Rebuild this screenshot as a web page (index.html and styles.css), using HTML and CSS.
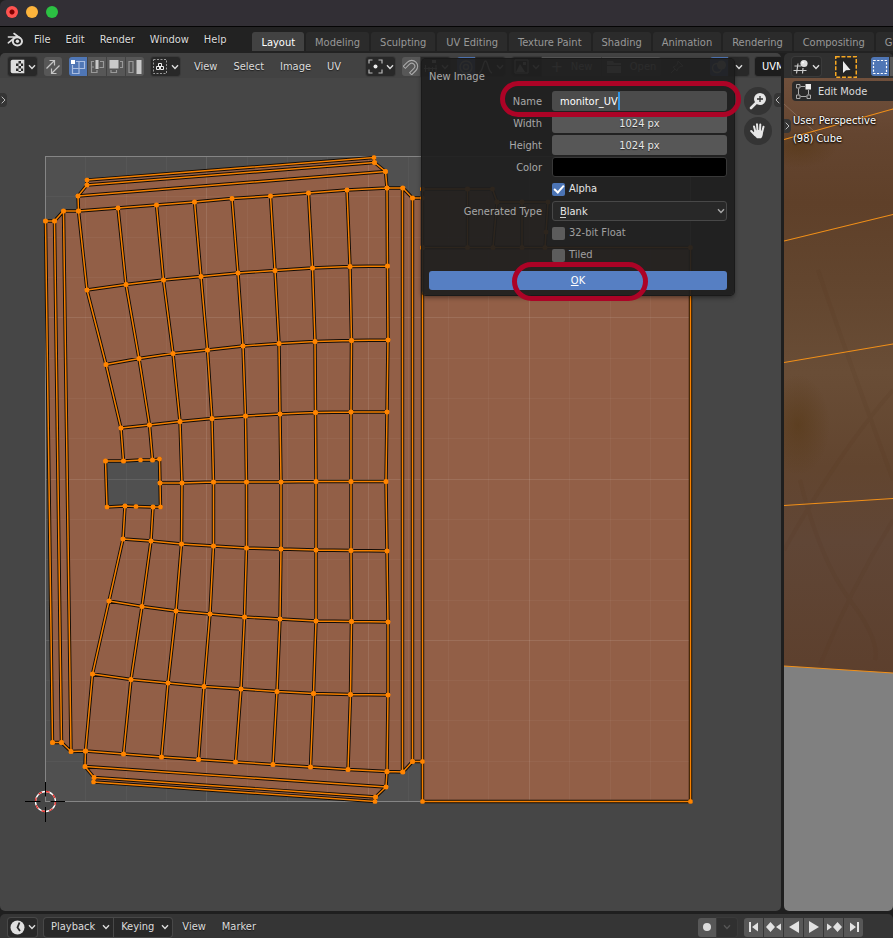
FILE: index.html
```html
<!DOCTYPE html>
<html lang="en">
<head>
<meta charset="utf-8">
<title>Blender</title>
<link rel="stylesheet" href="styles.css">
</head>
<body>
<svg class="defs" aria-hidden="true">
  <defs>
    <symbol id="chev" viewBox="0 0 8 6"><path d="M1 1.200 4 4.400 7 1.200" fill="none" stroke="currentColor" stroke-width="1.400"/></symbol>
    <marker id="vert" markerUnits="userSpaceOnUse" markerWidth="6" markerHeight="6" refX="3" refY="3"><rect x=".8" y=".8" width="4.400" height="4.400" rx="1.500" fill="#ff8400"/></marker>
    <path id="mesh" d="
      M45.500 221 54.500 221 63.500 211 78.500 211 118 208 156.500 205 194.500 202 232 198.500 270.500 196 308.500 193 347 190 387 188 403 188 412.500 198 422.500 198
      M87 290 126 284.500 163.500 280 201 276.500 238 273 275 270.500 312.500 268 350 266.500 387.500 266
      M106 364.500 139 358.500 173 353.500 207.500 350 243 346 279 343.500 315 341.500 351.500 340.500 388 340
      M121 428 149.500 425 180 421.500 212 418.500 245.500 416 280 414 315.500 412.500 351 412 387 412
      M160 483 182 483 213.500 482 246.500 482 281 482 316 481.500 351 481.500 386 481.500
      M123 539 151 541 181.500 544 213.500 546 246.500 548 281 549 316 550 351 550.500 387 551
      M109 601 142 606.500 176 611 210 614 244.500 617 280 619 316 621 351.500 621.500 388 622
      M92.500 674 131 679.500 168 683 204 686.500 241 689 277 691.500 313.500 693.500 350.500 694.500 388 695
      M52.500 742.500 61.500 742.500 71 751.500 85.500 751 123.500 754 161.500 757 198.500 759.500 235.500 762 273 764.500 310.500 767 348 769.500 387 771.500 403 772 412.500 761.500 422.500 761.500
      M78.500 211 87 290 106 364.500 121 428 123.500 461
      M118 208 126 284.500 139 358.500 149.500 425 152.500 460
      M156.500 205 163.500 280 173 353.500 180 421.500 182 483 181.500 544 176 611 168 683 161.500 757
      M194.500 202 201 276.500 207.500 350 212 418.500 213.500 482 213.500 546 210 614 204 686.500 198.500 759.500
      M232 198.500 238 273 243 346 245.500 416 246.500 482 246.500 548 244.500 617 241 689 235.500 762
      M270.500 196 275 270.500 279 343.500 280 414 281 482 281 549 280 619 277 691.500 273 764.500
      M308.500 193 312.500 268 315 341.500 315.500 412.500 316 481.500 316 550 316 621 313.500 693.500 310.500 767
      M347 190 350 266.500 351.500 340.500 351 412 351 481.500 351 550.500 351.500 621.500 350.500 694.500 348 769.500
      M387 188 387.500 266 388 340 387 412 386 481.500 387 551 388 622 388 695 387 771.500
      M125 506 123 539 109 601 92.500 674 85.500 751
      M153 507 151 541 142 606.500 131 679.500 123.500 754
      M105.500 461 123.500 461 140.500 460 152.500 460 159.500 459 160 483 160.500 507 153 507 136 506.500 125 506 107 507Z
      M45.500 221 52.500 742.500 M54.500 221 61.500 742.500 M63.500 211 71 751.500
      M402.500 188 402.500 772 M412.500 198 412.500 761.500
      M78.500 211 78 196 87 185 87 180 374 157.500 374.500 162.500 385.500 171.500 387 188
      M87 185 374.500 162.500 M78 196 385.500 171.500
      M85.500 751 85 766.500 94 777.500 93.500 782 375 801.500 375.500 797 386 787 387 771.500
      M94 777.500 375.500 797 M85 766.500 386 787
      M422.500 189 422.500 247.500 690.500 247.500 690.500 801.500 422.500 801.500 422.500 247.500
      M422.500 189 467.500 189 492.500 189 497 202 522 202 548 202 546 232 545 247.500
      M467.500 189 467.500 247.500 M497 202 493 247.500 M522 202 522 247.500"/>
  </defs>
</svg>

<div class="window">
  <header class="titlebar">
    <button class="light close" aria-label="Close"></button>
    <button class="light min" aria-label="Minimise"></button>
    <button class="light max" aria-label="Zoom"></button>
  </header>

  <div class="topbar">
    <svg class="logo" width="17" height="16" viewBox="0 0 17 16" aria-hidden="true">
      <path d="M1.400 5H9.500M7 1.500 13 6M1.300 10.800 8 5.500" fill="none" stroke="#ddd" stroke-width="1.600" stroke-linecap="round"/>
      <ellipse cx="10.400" cy="9.300" rx="4.600" ry="4.100" fill="none" stroke="#ddd" stroke-width="2"/>
      <circle cx="10.400" cy="9.200" r="1.700" fill="#ddd"/>
    </svg>
    <nav class="menus main-menus"><a href="#">File</a><a href="#">Edit</a><a href="#">Render</a><a href="#">Window</a><a href="#">Help</a></nav>
    <nav class="tabs">
      <a href="#" class="tab active">Layout</a><a href="#" class="tab">Modeling</a><a href="#" class="tab">Sculpting</a><a href="#" class="tab">UV Editing</a><a href="#" class="tab">Texture Paint</a><a href="#" class="tab">Shading</a><a href="#" class="tab">Animation</a><a href="#" class="tab">Rendering</a><a href="#" class="tab">Compositing</a><a href="#" class="tab">Geometry Nodes</a>
    </nav>
  </div>

  <main class="workspace">
    <section class="area uv">
      <div class="area-head">
        <div class="tools">
          <button class="btn drop" aria-label="Editor type">
            <svg width="15" height="15" viewBox="0 0 15 15"><path d="M2.500.7H6V14.300H2.500Q.7 14.300.7 12.500V2.500Q.7.7 2.500.7Z" fill="#ddd"/><path d="M6 1.300H13.700V13.700H6" fill="#2a2a2a" stroke="#ddd" stroke-width="1.200"/><path d="M6 2h2.500v2.500H6zM11 2h2.500v2.500H11zM8.500 4.500H11V7H8.500zM6 7h2.500v2.500H6zM11 7h2.500v2.500H11zM8.500 9.500H11V12H8.500zM6 12h2.500v1.500H6zM11 12h2.500v1.500H11z" fill="#ddd"/></svg>
            <svg class="chev" width="8" height="6"><use href="#chev"/></svg>
          </button>
          <button class="btn lit icon" aria-label="Sync selection">
            <svg width="16" height="16" viewBox="0 0 16 16" fill="none" stroke="#c4c4c4" stroke-width="1.200"><path d="M1.500 9.500 9.500 1.500M4.500 1.500H9.500V6.500M14.500 6.500 6.500 14.500M6.500 9.500V14.500H11.500"/></svg>
          </button>
          <div class="group">
            <button class="btn lit icon on" aria-label="Vertex select"><svg width="16" height="16" viewBox="0 0 16 16" fill="none" stroke="#a9bde0" stroke-width="1.200"><path d="M6 2.500H14.500V9.500H2.500V6M9 2.500V14.500H2.500V9.500"/><path d="M1 1h4v4H1z" fill="#fff" stroke="none"/></svg></button>
            <button class="btn lit icon" aria-label="Edge select"><svg width="16" height="16" viewBox="0 0 16 16" fill="none" stroke="#999" stroke-width="1.200"><path d="M5 2.500H2.500V13.500H8V11M2.500 8H5M11 2.500H14.500V8.500H10.500"/><path d="M6.500 1h3v9h-3z" fill="#c9c9c9" stroke="none"/></svg></button>
            <button class="btn lit icon" aria-label="Face select"><svg width="16" height="16" viewBox="0 0 16 16" fill="none" stroke="#999" stroke-width="1.200"><path d="M3 11V13.500H8.500V11M12 2.500H14.500V8.500H12"/><path d="M1.500 1h9v8.500h-9z" fill="#c9c9c9" stroke="none"/></svg></button>
            <button class="btn lit icon" aria-label="Island select"><svg width="16" height="16" viewBox="0 0 16 16" fill="none" stroke="#999" stroke-width="1.200"><path d="M2 2.500H6V13.500H2Z"/><path d="M9.500 1h5v14h-5z" fill="#c9c9c9" stroke="none"/></svg></button>
          </div>
          <button class="btn drop" aria-label="Sticky selection mode">
            <svg width="16" height="15" viewBox="0 0 16 15" fill="none" stroke="#999"><path d="M1.500.5H14.500V14.500H1.500Z" stroke-dasharray="2 1.500"/><path d="M6.500 4.500h3v3h-3zM4.500 7.500h3v3h-3zM8.500 7.500h3v3h-3z" stroke="#eee"/></svg>
            <svg class="chev" width="8" height="6"><use href="#chev"/></svg>
          </button>
        </div>
        <nav class="menus uv-menus"><a href="#">View</a><a href="#">Select</a><a href="#">Image</a><a href="#">UV</a></nav>
        <div class="tools">
          <button class="btn drop" aria-label="Pivot point">
            <svg width="15" height="15" viewBox="0 0 15 15" fill="none" stroke="#bbb" stroke-width="1.200"><path d="M1 4.500V1H4.500M10.500 1H14V4.500M14 10.500V14H10.500M4.500 14H1V10.500"/><circle cx="7.500" cy="7.500" r="2" fill="#eee" stroke="none"/></svg>
            <svg class="chev" width="8" height="6"><use href="#chev"/></svg>
          </button>
          <div class="group">
            <button class="btn lit icon" aria-label="Snap"><svg width="16" height="16" viewBox="0 0 16 16" fill="none"><g transform="rotate(45 8 8)"><path d="M3.500 13.500V7A4.500 4.500 0 0 1 12.500 7V13.500" stroke="#aaa" stroke-width="4"/><path d="M3.500 12.500V7A4.500 4.500 0 0 1 12.500 7V12.500" stroke="#555" stroke-width="1.800"/></g></svg></button>
            <button class="btn drop" aria-label="Snap target"><svg width="15" height="15" viewBox="0 0 15 15" stroke="#ccc"><path d="M1 9.500H14M2.500 6V13M6 8V12M9.500 8V12M13 6V13"/><path d="M9 1h4v3H9z" fill="#eee" stroke="none"/></svg><svg class="chev" width="8" height="6"><use href="#chev"/></svg></button>
          </div>
          <div class="group">
            <button class="btn lit icon on" aria-label="Proportional editing"><svg width="16" height="16" viewBox="0 0 16 16" fill="none" stroke="#ddd" stroke-width="1.400"><circle cx="8" cy="8" r="6"/><circle cx="8" cy="8" r="2.500"/></svg></button>
            <button class="btn drop" aria-label="Falloff"><svg width="15" height="15" viewBox="0 0 15 15" fill="none" stroke="#ccc" stroke-width="1.300"><path d="M1 14C5 13 5 2 7.500 2S10 13 14 14"/></svg><svg class="chev" width="8" height="6"><use href="#chev"/></svg></button>
          </div>
          <div class="group">
            <button class="btn drop" aria-label="Browse image"><svg width="15" height="15" viewBox="0 0 15 15"><path d="M1 1H14V14H1Z" fill="none" stroke="#ccc"/><path d="M2 13 6 5 11 13ZM9 3h3v3H9z" fill="#ccc"/></svg><svg class="chev" width="8" height="6"><use href="#chev"/></svg></button>
            <button class="btn lit word"><span class="glyph">+</span>New</button>
            <button class="btn lit word"><svg width="15" height="12" viewBox="0 0 15 12"><path d="M0 0H6L7 2H14V4H0ZM0 5H14V12H0Z" fill="#ccc"/></svg>Open</button>
          </div>
          <button class="btn bare icon" aria-label="Pin"><svg width="14" height="14" viewBox="0 0 14 14" fill="none" stroke="#aaa"><path d="M8 1 13 6 10 6.500 7.500 9 7 11 3 7 5 6.500 7.500 4ZM5 9 1 13"/></svg></button>
        </div>
        <div class="tools end">
          <div class="group">
            <button class="btn lit icon on" aria-label="Overlays"><svg width="16" height="16" viewBox="0 0 16 16"><circle cx="6" cy="9" r="4.500" fill="none" stroke="#ddd" stroke-width="1.300"/><circle cx="10.500" cy="6" r="4.500" fill="#ddd"/></svg></button>
            <button class="btn narrow" aria-label="Overlay options"><svg class="chev" width="8" height="6"><use href="#chev"/></svg></button>
          </div>
          <button class="btn uvmap">UVMap</button>
        </div>
      </div>

      <div class="canvas">
        <svg class="scene" role="img" aria-label="UV layout">
          <g transform="translate(0 -78)">
            <rect x="45.500" y="156.500" width="645" height="645" fill="#505050"/>
            <path class="face" fill-rule="evenodd" d="M45.500 221H54.500L63.500 211H78.500L78 196 87 185V180L374 157.500 374.500 162.500 385.500 171.500 387 188H403L412.500 198H422.500V189H492.500L497 202H548L545 247.500H690.500V801.500H422.500V761.500H412.500L403 772H387L386 787 375.500 797 375 801.500 93.500 782 94 777.500 85 766.500 85.500 751 71 751.500 61.500 742.500H52.500ZM105.500 461 107 507H160.500L159.500 459Z"/>
            <path class="grid" d="M85.500 157V801M126.500 157V801M166.500 157V801M247.500 157V801M287.500 157V801M327.500 157V801M408.500 157V801M448.500 157V801M488.500 157V801M569.500 157V801M610.500 157V801M650.500 157V801M46 196.500H690M46 237.500H690M46 277.500H690M46 358.500H690M46 398.500H690M46 438.500H690M46 519.500H690M46 559.500H690M46 600.500H690M46 680.500H690M46 720.500H690M46 761.500H690"/>
            <path class="grid major" d="M206.500 157V801M368.500 157V801M529.500 157V801M46 317.500H690M46 479.500H690M46 640.500H690"/>
            <rect x="45.500" y="156.500" width="645" height="645" fill="none" stroke="#858585"/>
            <use href="#mesh" class="outline"/>
            <use href="#mesh" class="wire"/>
            <circle cx="45.500" cy="801.500" r="10" fill="none" stroke="#fff" stroke-width="1.300"/>
            <circle cx="45.500" cy="801.500" r="10" fill="none" stroke="#e8302c" stroke-width="1.300" stroke-dasharray="3.930"/>
            <path d="M25 801.500H40.500M50.500 801.500H65M45.500 782V796.500M45.500 807V822" stroke="#000"/>
          </g>
        </svg>
        <button class="fold left" aria-label="Show toolbar"><svg width="5" height="8" viewBox="0 0 5 8"><path d="M.7.7 4 4 .7 7.300" fill="none" stroke="#bbb"/></svg></button>
        <button class="fold right" aria-label="Show sidebar"><svg width="5" height="8" viewBox="0 0 5 8"><path d="M4.300.7 1 4 4.300 7.300" fill="none" stroke="#bbb"/></svg></button>
        <div class="gizmos">
          <button class="round" aria-label="Zoom view"><svg width="18" height="18" viewBox="0 0 18 18"><circle cx="11" cy="7" r="6" fill="#e6e6e6"/><path d="M7 11 2 16" stroke="#e6e6e6" stroke-width="2.600" stroke-linecap="round"/><path d="M11 4V10M8 7H14" stroke="#333" stroke-width="1.300"/></svg></button>
          <button class="round" aria-label="Pan view"><svg width="18" height="18" viewBox="0 0 18 18" fill="none" stroke="#e6e6e6" stroke-linecap="round"><path d="M5 4.500 6.500 10M8 2.200 8.500 9M11.300 2.500 11 9M14.500 4.800 13.200 10M2.200 9 6 13" stroke-width="2"/><path d="M5.500 9Q10 7 14 9.500 14 14.500 12 16.200H8Q5 14 4.500 11Z" fill="#e6e6e6" stroke="none"/></svg></button>
        </div>
      </div>

      <form class="dialog" aria-label="New Image" onsubmit="return false">
        <h2>New Image</h2>
        <div class="fields">
          <label for="name">Name</label>
          <div class="field"><input id="name" class="text editing" type="text" value="monitor_UV"><span class="caret"></span></div>
          <label for="w">Width</label>
          <input id="w" class="text number" type="text" value="1024 px">
          <label for="h">Height</label>
          <input id="h" class="text number" type="text" value="1024 px">
          <label for="c">Color</label>
          <button id="c" class="swatch" type="button" aria-label="Color"></button>
          <label class="check"><input type="checkbox" checked>Alpha</label>
          <label for="g">Generated Type</label>
          <div class="field hotkey"><select id="g"><option>Blank</option></select><svg class="chev" width="8" height="6"><use href="#chev"/></svg></div>
          <label class="check dim"><input type="checkbox">32-bit Float</label>
          <label class="check dim"><input type="checkbox">Tiled</label>
        </div>
        <button class="ok"><u>O</u>K</button>
        <span class="ring ring-name"></span>
        <span class="ring ring-ok"></span>
      </form>
    </section>

    <section class="area view3d">
      <div class="area-head dark">
        <button class="btn drop" aria-label="Editor type">
          <svg width="16" height="16" viewBox="0 0 16 16" fill="none" stroke="#ccc" stroke-width="1.200"><path d="M1.500 7H8M.5 11.500H13.500M5 4.500 3.500 14.500M10 9 9.500 14.500"/><circle cx="11" cy="4.500" r="3.600" fill="#ddd" stroke="none"/><circle cx="10" cy="3.500" r="1" fill="#fff" stroke="none"/></svg>
          <svg class="chev" width="8" height="6"><use href="#chev"/></svg>
        </button>
        <button class="tool" aria-label="Tweak tool"><svg width="22" height="22" viewBox="0 0 22 22"><rect x=".75" y=".75" width="20.500" height="20.500" fill="#252525" stroke="#f7a823" stroke-width="1.500" stroke-dasharray="4 1.700"/><path d="M8 5V17L11 14.200 15.500 14Z" fill="#eee"/></svg></button>
        <div class="group">
          <button class="btn lit icon on" aria-label="Select box"><svg width="16" height="16" viewBox="0 0 16 16"><path d="M1.500 1.500H14.500V14.500H1.500Z" fill="none" stroke="#fff" stroke-width="1.200" stroke-dasharray="2.200 1.500"/></svg></button>
          <button class="btn lit icon" aria-label="Extend selection"></button>
        </div>
      </div>
      <div class="canvas render">
        <svg class="scene" role="img" aria-label="Perspective viewport">
          <defs>
            <linearGradient id="wood" x1="0" y1="0" x2="0" y2="1">
              <stop offset="0" stop-color="#70503c"/><stop offset=".09" stop-color="#644530"/><stop offset=".2" stop-color="#5f4029"/><stop offset=".32" stop-color="#62452e"/><stop offset=".47" stop-color="#694d36"/><stop offset=".62" stop-color="#62452f"/><stop offset=".74" stop-color="#604636"/><stop offset="1" stop-color="#5c3e2b"/>
            </linearGradient>
            <radialGradient id="spot"><stop offset="0" stop-color="#543510" stop-opacity=".5"/><stop offset="1" stop-color="#543510" stop-opacity="0"/></radialGradient>
          </defs>
          <g transform="translate(-784 -78)">
            <path d="M784 78H1400V705L893 673 784 666Z" fill="url(#wood)"/>
            <ellipse cx="798" cy="146" rx="40" ry="22" fill="url(#spot)"/>
            <ellipse cx="798" cy="425" rx="32" ry="50" fill="url(#spot)"/>
            <path d="M818 270Q845 350 893 480M893 390Q840 450 784 550M800 480Q820 560 850 600T875 660M893 520Q850 590 820 665" fill="none" stroke="#54361d" stroke-width="4" opacity=".13"/>
            <path d="M784 104 825 141" stroke="#9a8070" opacity=".5"/>
            <path d="M784 139.500 893 109 1400 -33M784 241 893 214.500 1400 91M784 362.500 893 344 1400 258M784 505.500 893 498.500 1400 466M784 666 893 673 1400 705" fill="none" stroke="#f29018" stroke-width="1.200"/>
          </g>
        </svg>
        <div class="mode"><svg width="15" height="15" viewBox="0 0 15 15" fill="none" stroke="#aaa"><path d="M2.500 4.500V10.500M4.500 12.500H10.500M12.500 6V10.500M4.500 2.500H9"/><path d="M.5.5h3.500v3.500H.5zM.5 11h3.500v3.500H.5zM11 11h3.500v3.500H11z"/><path d="M9.500 0H15V5.500H9.500Z" fill="#eee" stroke="none"/></svg><select aria-label="Mode"><option>Edit Mode</option></select><svg class="chev" width="8" height="6"><use href="#chev"/></svg></div>
        <p class="info">User Perspective<br>(98) Cube</p>
        <button class="fold left low" aria-label="Show toolbar"><svg width="5" height="8" viewBox="0 0 5 8"><path d="M.7.7 4 4 .7 7.300" fill="none" stroke="#bbb"/></svg></button>
      </div>
    </section>
  </main>

  <footer class="timeline">
    <button class="btn drop outlined" aria-label="Editor type"><svg width="15" height="15" viewBox="0 0 15 15"><circle cx="7.500" cy="7.500" r="7" fill="#e0e0e0"/><path d="M9.500 2.500 7.500 7.500 10 11" fill="none" stroke="#2a2a2a" stroke-width="1.800"/></svg><svg class="chev" width="8" height="6"><use href="#chev"/></svg></button>
    <div class="group">
      <button class="btn outlined labelled">Playback<svg class="chev" width="8" height="6"><use href="#chev"/></svg></button>
      <button class="btn outlined labelled">Keying<svg class="chev" width="8" height="6"><use href="#chev"/></svg></button>
    </div>
    <nav class="menus time-menus"><a href="#">View</a><a href="#">Marker</a></nav>
    <div class="transport">
      <div class="group">
        <button class="btn lit icon" aria-label="Auto keying"><svg width="16" height="16" viewBox="0 0 16 16"><circle cx="8" cy="8" r="4" fill="#ddd"/></svg></button>
        <button class="btn narrow faded" aria-label="Keying options"><svg class="chev" width="8" height="6"><use href="#chev"/></svg></button>
      </div>
      <div class="group keys">
        <button class="btn lit" aria-label="Jump to start"><svg width="16" height="12" viewBox="0 0 16 12"><path d="M3 1h2v10H3zM12 1.500V10.500L6 6Z"/></svg></button>
        <button class="btn lit" aria-label="Previous keyframe"><svg width="16" height="12" viewBox="0 0 16 12"><path d="M0 6 4.500 1 9 6 4.500 11ZM15 2.500V9.500L10 6Z"/></svg></button>
        <button class="btn lit" aria-label="Play reversed"><svg width="16" height="12" viewBox="0 0 16 12"><path d="M13 0V12L3 6Z"/></svg></button>
        <button class="btn lit" aria-label="Play"><svg width="16" height="12" viewBox="0 0 16 12"><path d="M3 0V12L13 6Z"/></svg></button>
        <button class="btn lit" aria-label="Next keyframe"><svg width="16" height="12" viewBox="0 0 16 12"><path d="M7 6 11.500 1 16 6 11.500 11ZM1 2.500V9.500L6 6Z"/></svg></button>
        <button class="btn lit" aria-label="Jump to end"><svg width="16" height="12" viewBox="0 0 16 12"><path d="M11 1h2v10h-2zM4 1.500V10.500L10 6Z"/></svg></button>
      </div>
    </div>
  </footer>
</div>
</body>
</html>
```

FILE: styles.css
```css
* { box-sizing: border-box; }

body {
  margin: 0;
  background: #1f1f1f;
  color: #dcdcdc;
  font: 11px/20px "DejaVu Sans Condensed", "DejaVu Sans", sans-serif;
}

button, input, select {
  margin: 0;
  padding: 0;
  border: 0;
  font: inherit;
  color: inherit;
}

a { color: inherit; text-decoration: none; }
svg { display: block; flex: none; }
.defs { position: absolute; width: 0; height: 0; }

.window {
  display: flex;
  flex-direction: column;
  height: 100vh;
  overflow: hidden;
}

/* Title bar */
.titlebar {
  display: flex;
  align-items: center;
  gap: 8px;
  flex: none;
  height: 27px;
  padding: 0 6px 2px;
  background: #322f35;
  border-bottom: 1px solid #050505;
  border-top-left-radius: 6px;
}
.light { width: 12px; height: 12px; border-radius: 50%; }
.close { background: radial-gradient(circle, #7d0000 2px, #ff5350 3px); }
.min { background: #fdb43c; }
.max { background: #2cc143; }

/* Menus and workspace tabs */
.topbar {
  display: flex;
  flex: none;
  height: 26px;
  background: #222;
  padding-left: 7px;
  overflow: hidden;
}
.logo { margin-top: 5px; }
.menus { display: flex; white-space: nowrap; text-shadow: 0 1px 1px #0008; }
.menus a { padding: 0 8px; }
.main-menus { gap: 1px; margin: 3px 19px 0 3px; }
.main-menus a { padding: 0 7px; }
.tabs { display: flex; gap: 2px; padding-top: 5px; height: 24px; }
.tab {
  flex: none;
  padding: 0 9px;
  line-height: 22px;
  border-radius: 3px 3px 0 0;
  background: #2b2b2b;
  color: #989898;
  white-space: nowrap;
}
.tab.active { background: #424242; color: #fff; }

/* Editor areas */
.workspace {
  flex: 1;
  min-height: 0;
  display: grid;
  grid-template-columns: minmax(0, 781fr) minmax(0, 109fr);
  gap: 3px;
}
.area {
  position: relative;
  display: flex;
  flex-direction: column;
  min-height: 0;
  border-radius: 5px;
}
.area-head {
  display: flex;
  align-items: center;
  flex: none;
  height: 25px;
  padding: 2px 0 0 8px;
  background: #424242;
  border-radius: 5px 5px 0 0;
  overflow: hidden;
}
.area-head.dark { background: #303030; gap: 14px; }
.tools { display: flex; gap: 7px; flex: none; }
.tools.end { margin-left: auto; gap: 6px; padding-left: 13px; }
.uv-menus { margin: 0 17px 0 6px; }
.group { display: flex; gap: 1px; flex: none; }

.btn {
  display: flex;
  align-items: center;
  justify-content: center;
  flex: none;
  height: 19px;
  border-radius: 3px;
  background: #282828;
  box-shadow: 0 0 0 1px #3a3a3a;
}
.btn.drop { width: 29px; gap: 3px; }
.btn.icon { width: 18px; }
.btn.narrow { width: 20px; }
.btn.lit { background: #575757; box-shadow: none; }
.btn.on { background: #4f76b5; }
.btn.bare { background: none; box-shadow: none; }
.btn.word { width: 59px; gap: 8px; }
.btn.uvmap { width: 26px; padding-left: 7px; justify-content: flex-start; overflow: hidden; border-radius: 3px 0 0 3px; background: #1d1d1d; color: #fff; }
.group .btn:not(:last-child) { border-top-right-radius: 0; border-bottom-right-radius: 0; }
.group .btn:not(:first-child) { border-top-left-radius: 0; border-bottom-left-radius: 0; }
.glyph { font-size: 16px; }
.tool { background: none; }

.canvas {
  position: relative;
  flex: 1;
  min-height: 0;
  background: #464646;
  border-radius: 0 0 5px 5px;
  overflow: hidden;
}
.scene { position: absolute; inset: 0; width: 100%; height: 100%; }
.face { fill: #925f47; }
.grid { fill: none; stroke: #fff; stroke-opacity: .04; }
.grid.major { stroke-opacity: .1; }
.outline { fill: none; stroke: #120c06; stroke-width: 3.4px; }
.wire { fill: none; stroke: #f58000; stroke-width: 1.5px; marker: url(#vert); }

.fold {
  position: absolute;
  top: 15px;
  display: flex;
  align-items: center;
  justify-content: center;
  width: 7px;
  height: 14px;
  background: #353535;
}
.fold.left { left: 0; border-radius: 0 4px 4px 0; }
.fold.right { right: 0; border-radius: 4px 0 0 4px; }
.fold.low { top: 41px; }
.gizmos { position: absolute; top: 9px; right: 9px; display: grid; gap: 2px; }
.round {
  display: grid;
  place-items: center;
  width: 28px;
  height: 28px;
  border-radius: 50%;
  background: #343434;
}

/* 3D viewport */
.render { background: #808080; }
.mode {
  position: relative;
  display: flex;
  align-items: center;
  gap: 7px;
  width: 140px;
  height: 20px;
  margin: 3px 0 0 8px;
  padding-left: 4px;
  background: #2a2a2a;
  border-radius: 4px;
}
.mode select { appearance: none; background: none; width: 72px; padding-top: 1px; }
.info {
  position: relative;
  margin: 11px 0 0 9px;
  line-height: 18px;
  color: #fff;
  text-shadow: 0 0 2px #000, 0 1px 2px #000;
  white-space: nowrap;
}

/* New Image pop-up */
.dialog {
  position: absolute;
  top: 6px;
  left: 422px;
  width: 312px;
  padding: 7px 7px 5px;
  border-radius: 4px;
  background: #1f1f1fef;
  box-shadow: 0 0 0 1px #1a1a1a, 0 2px 5px #0008;
  color: #a8a8a8;
}
.dialog h2 { margin: 0 0 3px; font-size: 11px; font-weight: normal; line-height: 22px; }
.fields {
  display: grid;
  grid-template-columns: 113px 1fr;
  gap: 2px 10px;
  grid-auto-rows: 20px;
}
.fields > label { text-align: right; line-height: 22px; }
.fields > .check {
  grid-column: 2;
  display: flex;
  align-items: center;
  gap: 4px;
  color: #e6e6e6;
}
.fields > .check.dim { color: #a0a0a0; }
.check input {
  appearance: none;
  width: 13px;
  height: 13px;
  border-radius: 2px;
  background: #5c5c5c;
}
.check input:checked {
  display: grid;
  place-items: center;
  background: #4b74b5;
}
.check input:checked::after {
  content: "";
  width: 4px;
  height: 8px;
  margin-bottom: 2px;
  border: solid #fff;
  border-width: 0 2px 2px 0;
  rotate: 42deg;
}
.field { position: relative; }
.text, .swatch, .dialog select {
  display: block;
  width: 100%;
  height: 20px;
  padding-top: 1px;
  border-radius: 3px;
  background: #575757;
  color: #e6e6e6;
}
.text.number { text-align: center; text-shadow: 0 1px 1px #0008; }
.text.editing { padding-left: 8px; background: #4b4b4b; color: #fff; outline: 0; }
.caret { position: absolute; top: 1px; left: 66px; width: 2px; height: 18px; background: #3296e6; }
.swatch { background: #000; border: 1px solid #383838; }
.dialog select {
  appearance: none;
  padding: 0 0 0 7px;
  background: #282828;
  border: 1px solid #484848;
}
.field .chev { position: absolute; right: 2px; top: 7px; }
.hotkey::after {
  content: "";
  position: absolute;
  left: 8px;
  bottom: 3px;
  width: 6px;
  height: 1px;
  background: #ccc;
}
.ok {
  display: block;
  width: 100%;
  height: 19px;
  margin: 6px 0 0;
  border-radius: 3px;
  background: #567fc3;
  color: #fff;
}
.ring { position: absolute; border: 5px solid #ac0326; pointer-events: none; }
.ring-name { top: 22px; left: 78px; width: 241px; height: 36px; border-radius: 18px; }
.ring-ok { top: 203px; left: 90px; width: 136px; height: 39px; border-radius: 20px; }

/* Timeline */
.timeline {
  display: flex;
  align-items: center;
  flex: none;
  height: 24px;
  margin-top: 3px;
  padding: 2px 30px 0 8px;
  background: #353535;
  border-radius: 5px 5px 0 0;
}
.outlined { box-shadow: 0 0 0 1px #484848; }
.timeline > .group { margin-left: 7px; }
.labelled { gap: 7px; padding: 0 3px 0 7px; }
.time-menus { margin-left: 2px; }
.transport { display: flex; gap: 7px; margin-left: auto; }
.keys .btn { width: 19px; }
.keys svg { fill: #e2e2e2; }
.faded { background: #303030; color: #555; }
```
